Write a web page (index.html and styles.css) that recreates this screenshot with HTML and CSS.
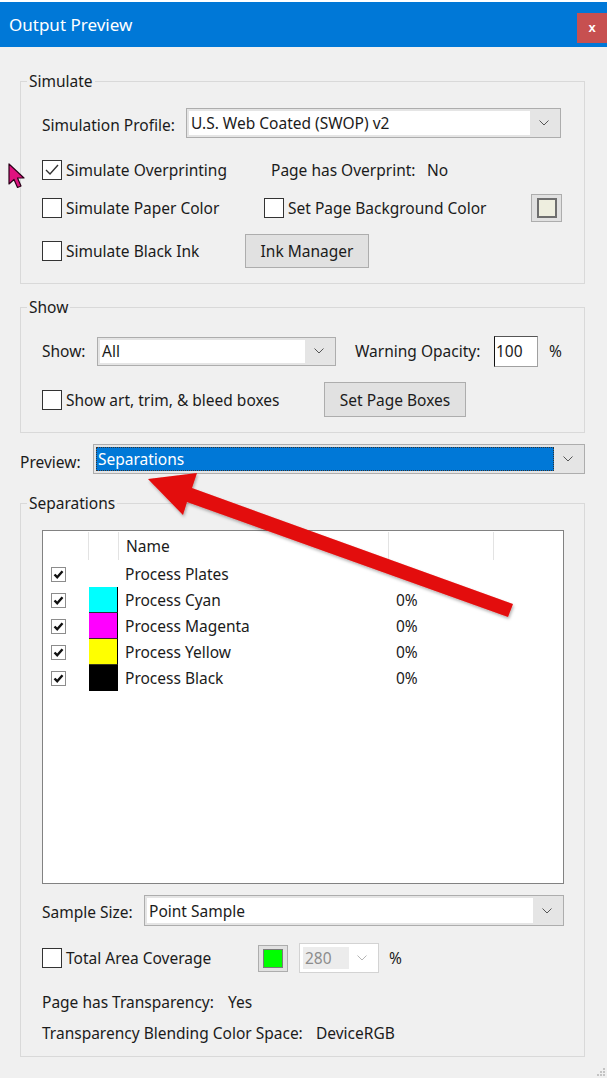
FILE: index.html
```html
<!DOCTYPE html>
<html lang="en">
<head>
    <meta charset="UTF-8">
    <meta name="viewport" content="width=device-width, initial-scale=1.0">
    <title>Output Preview</title>
    <link rel="stylesheet" href="styles.css">
</head>
<body>
<div class="window">
    <div class="topstrip"></div>
    <div class="titlebar">
        <span class="title">Output Preview</span>
        <button class="close">x</button>
    </div>

    <div class="content">
        <fieldset class="group simulate">
            <legend>Simulate</legend>
            <div class="row profile-row">
                <span class="profile-label">Simulation Profile:</span>
                <div class="combo profile-combo">
                    <span class="combo-text">U.S. Web Coated (SWOP) v2</span>
                    <span class="combo-arrow"><svg width="10" height="6" viewBox="0 0 10 6"><polyline points="0.5,0.5 5,5 9.5,0.5" fill="none" stroke="#555" stroke-width="1"/></svg></span>
                </div>
            </div>
            <div class="row overprint-row">
                <label class="check overprint-check">
                    <span class="box"><svg width="16" height="14" viewBox="0 0 16 14"><polyline points="2,7 6,11 14,2" fill="none" stroke="#333" stroke-width="1.4"/></svg></span>
                    Simulate Overprinting
                </label>
                <span class="info-label">Page has Overprint:</span>
                <span>No</span>
            </div>
            <div class="row paper-row">
                <label class="check paper-check"><span class="box"></span>Simulate Paper Color</label>
                <label class="check bg-check"><span class="box"></span>Set Page Background Color</label>
                <span class="swatch-btn"><span class="swatch paper-swatch"></span></span>
            </div>
            <div class="row ink-row">
                <label class="check ink-check"><span class="box"></span>Simulate Black Ink</label>
                <button class="btn ink-btn">Ink Manager</button>
            </div>
        </fieldset>

        <fieldset class="group show">
            <legend>Show</legend>
            <div class="row show-row">
                <span class="show-label">Show:</span>
                <div class="combo show-combo">
                    <span class="combo-text">All</span>
                    <span class="combo-arrow"><svg width="10" height="6" viewBox="0 0 10 6"><polyline points="0.5,0.5 5,5 9.5,0.5" fill="none" stroke="#555" stroke-width="1"/></svg></span>
                </div>
                <span class="opacity-label">Warning Opacity:</span>
                <span class="num-input">100</span>
                <span class="pct">%</span>
            </div>
            <div class="row boxes-row">
                <label class="check boxes-check"><span class="box"></span>Show art, trim, &amp; bleed boxes</label>
                <button class="btn boxes-btn">Set Page Boxes</button>
            </div>
        </fieldset>

        <div class="row preview-row">
            <span class="preview-label">Preview:</span>
            <div class="combo preview-combo">
                <span class="combo-text selected">Separations</span>
                <span class="combo-arrow"><svg width="10" height="6" viewBox="0 0 10 6"><polyline points="0.5,0.5 5,5 9.5,0.5" fill="none" stroke="#555" stroke-width="1"/></svg></span>
            </div>
        </div>

        <fieldset class="group separations">
            <legend>Separations</legend>
            <div class="list">
                <div class="list-head">
                    <span class="hcell"></span>
                    <span class="hcell"></span>
                    <span class="hcell name-cell">Name</span>
                    <span class="hcell"></span>
                    <span class="hcell"></span>
                </div>
                <div class="list-row">
                    <span class="check-cell"><span class="mini-box"><svg width="13" height="13" viewBox="0 0 13 13"><polyline points="2.5,6.5 5.2,9.2 10.5,3.2" fill="none" stroke="#111" stroke-width="2.4"/></svg></span></span>
                    <span class="ink-cell"></span>
                    <span class="name-cell">Process Plates</span>
                    <span class="pct-cell"></span>
                    <span></span>
                </div>
                <div class="list-row">
                    <span class="check-cell"><span class="mini-box"><svg width="13" height="13" viewBox="0 0 13 13"><polyline points="2.5,6.5 5.2,9.2 10.5,3.2" fill="none" stroke="#111" stroke-width="2.4"/></svg></span></span>
                    <span class="ink-cell"><span class="ink cyan"></span></span>
                    <span class="name-cell">Process Cyan</span>
                    <span class="pct-cell">0%</span>
                    <span></span>
                </div>
                <div class="list-row">
                    <span class="check-cell"><span class="mini-box"><svg width="13" height="13" viewBox="0 0 13 13"><polyline points="2.5,6.5 5.2,9.2 10.5,3.2" fill="none" stroke="#111" stroke-width="2.4"/></svg></span></span>
                    <span class="ink-cell"><span class="ink magenta"></span></span>
                    <span class="name-cell">Process Magenta</span>
                    <span class="pct-cell">0%</span>
                    <span></span>
                </div>
                <div class="list-row">
                    <span class="check-cell"><span class="mini-box"><svg width="13" height="13" viewBox="0 0 13 13"><polyline points="2.5,6.5 5.2,9.2 10.5,3.2" fill="none" stroke="#111" stroke-width="2.4"/></svg></span></span>
                    <span class="ink-cell"><span class="ink yellow"></span></span>
                    <span class="name-cell">Process Yellow</span>
                    <span class="pct-cell">0%</span>
                    <span></span>
                </div>
                <div class="list-row">
                    <span class="check-cell"><span class="mini-box"><svg width="13" height="13" viewBox="0 0 13 13"><polyline points="2.5,6.5 5.2,9.2 10.5,3.2" fill="none" stroke="#111" stroke-width="2.4"/></svg></span></span>
                    <span class="ink-cell"><span class="ink black"></span></span>
                    <span class="name-cell">Process Black</span>
                    <span class="pct-cell">0%</span>
                    <span></span>
                </div>
            </div>

            <div class="row sample-row">
                <span class="sample-label">Sample Size:</span>
                <div class="combo sample-combo">
                    <span class="combo-text">Point Sample</span>
                    <span class="combo-arrow"><svg width="10" height="6" viewBox="0 0 10 6"><polyline points="0.5,0.5 5,5 9.5,0.5" fill="none" stroke="#555" stroke-width="1"/></svg></span>
                </div>
            </div>
            <div class="row tac-row">
                <label class="check tac-check"><span class="box"></span>Total Area Coverage</label>
                <span class="swatch-btn green-btn"><span class="swatch green-swatch"></span></span>
                <div class="combo tac-combo">
                    <span class="combo-text">280</span>
                    <span class="combo-arrow"><svg width="10" height="6" viewBox="0 0 10 6"><polyline points="0.5,0.5 5,5 9.5,0.5" fill="none" stroke="#b5b5b5" stroke-width="1"/></svg></span>
                </div>
                <span class="pct">%</span>
            </div>
            <div class="row transp-row">
                <span class="transp-label">Page has Transparency:</span>
                <span>Yes</span>
            </div>
            <div class="row blend-row">
                <span class="blend-label">Transparency Blending Color Space:</span>
                <span>DeviceRGB</span>
            </div>
        </fieldset>
    </div>

    <!-- mouse pointer left in the capture -->
    <svg class="cursor" width="20" height="27" viewBox="0 0 20 27">
        <polygon points="1,1 1,21 6,16.5 9.5,24.5 13,23 9.5,15 16,15" fill="#e0127f" stroke="#2a0018" stroke-width="1.2" stroke-linejoin="round"/>
    </svg>

    <!-- red annotation arrow -->
    <svg class="annotation" width="607" height="1078" viewBox="0 0 607 1078">
        <defs>
            <filter id="shade" x="-10%" y="-10%" width="120%" height="130%">
                <feDropShadow dx="1" dy="2" stdDeviation="1.5" flood-color="#000" flood-opacity="0.3"/>
            </filter>
        </defs>
        <polygon points="148,479 197,473 192,488 513,604 508,617 187,502 183,515" fill="#e30a0a" filter="url(#shade)"/>
    </svg>

    <svg class="grip" width="9" height="9" viewBox="0 0 9 9">
        <rect x="6" y="0" width="2" height="2" fill="#c4c4c4"/>
        <rect x="3" y="3" width="2" height="2" fill="#c4c4c4"/>
        <rect x="6" y="3" width="2" height="2" fill="#c4c4c4"/>
        <rect x="0" y="6" width="2" height="2" fill="#c4c4c4"/>
        <rect x="3" y="6" width="2" height="2" fill="#c4c4c4"/>
        <rect x="6" y="6" width="2" height="2" fill="#c4c4c4"/>
    </svg>
</div>
</body>
</html>
```

FILE: styles.css
```css
* {
    box-sizing: border-box;
}

body {
    margin: 0;
    background: #f0f0f0;
    font-family: "Noto Sans", "Open Sans", sans-serif;
    font-size: 15.5px;
    color: #1b1b1b;
}

.window {
    position: relative;
    width: 607px;
    height: 1078px;
    overflow: hidden;
    background: #f0f0f0;
}

.topstrip {
    height: 2px;
    background: #fff;
}

.titlebar {
    height: 45px;
    background: #0078d7;
    display: flex;
    align-items: flex-start;
    justify-content: space-between;
    padding-left: 9px;
}

.title {
    color: #fff;
    font-size: 17px;
    line-height: 45px;
}

.close {
    width: 30px;
    height: 30px;
    margin-top: 11px;
    border: none;
    background: #c75050;
    color: #fff;
    font-family: "Liberation Sans", sans-serif;
    font-size: 13px;
    font-weight: bold;
    padding: 0 0 1px;
}

.content {
    padding: 24px 22px 0 20px;
}

.group {
    margin: 0;
    width: 565px;
    min-width: 0;
    padding: 0 21px 15px;
    border: 1px solid #d9d9d9;
}

.group legend {
    margin-left: -15px;
    padding: 0 2px;
    line-height: 20px;
}

.row {
    display: flex;
    align-items: center;
    white-space: nowrap;
}

/* checkboxes */
.check {
    display: flex;
    align-items: center;
}

.box {
    width: 20px;
    height: 20px;
    margin-right: 4px;
    border: 1px solid #333;
    background: #fff;
    display: flex;
    align-items: center;
    justify-content: center;
}

/* combo boxes */
.combo {
    display: flex;
    height: 30px;
    padding: 2px;
    border: 1px solid #adadad;
    background: #e5e5e5;
}

.combo-text {
    flex: 1;
    display: flex;
    align-items: center;
    padding-left: 2px;
    background: #fff;
}

.combo-text.selected {
    background: #0078d7;
    color: #fff;
    outline: 1px dotted #333;
    outline-offset: -1px;
}

.combo-arrow {
    width: 28px;
    display: flex;
    align-items: center;
    justify-content: center;
}

.btn {
    height: 100%;
    padding: 0;
    border: 1px solid #adadad;
    background: #e1e1e1;
    color: #1b1b1b;
    font: inherit;
}

.swatch-btn {
    display: flex;
    align-items: center;
    justify-content: center;
    width: 31px;
    height: 28px;
    border: 1px solid #adadad;
    background: #e1e1e1;
}

.swatch {
    width: 20px;
    height: 20px;
    border: 2px solid #6e6e6e;
}

.paper-swatch {
    background: #eeeedf;
}

.pct {
    margin-left: 11px;
}

/* Simulate */
.profile-row {
    margin-top: 17px;
    height: 30px;
}

.profile-label {
    width: 144px;
    padding-top: 3px;
}

.profile-combo {
    width: 375px;
}

.overprint-row {
    margin-top: 16px;
    height: 32px;
}

.overprint-check {
    width: 229px;
}

.info-label {
    width: 156px;
}

.paper-row {
    margin-top: 6px;
    height: 32px;
}

.paper-check {
    width: 222px;
}

.bg-check {
    width: 267px;
}

.ink-row {
    margin-top: 10px;
    height: 34px;
}

.ink-check {
    width: 203px;
}

.ink-btn {
    width: 124px;
}

/* Show */
.show {
    margin-top: 13px;
}

.show-row {
    margin-top: 18px;
    height: 32px;
}

.show-label {
    width: 55px;
}

.show-combo {
    width: 239px;
    height: 29px;
}

.opacity-label {
    width: 139px;
    margin-left: 19px;
}

.num-input {
    width: 44px;
    height: 31px;
    display: flex;
    align-items: center;
    padding-left: 1px;
    border: 1px solid #a0a0a0;
    border-left-color: #111;
    border-top-color: #555;
    background: #fff;
}

.boxes-row {
    margin-top: 15px;
    height: 35px;
}

.boxes-check {
    width: 282px;
}

.boxes-btn {
    width: 142px;
}

/* Preview */
.preview-row {
    margin-top: 11px;
    height: 30px;
}

.preview-label {
    width: 73px;
    padding-top: 6px;
}

.preview-combo {
    width: 492px;
}

/* Separations */
.separations {
    margin-top: 19px;
    padding: 0 20px 13px 21px;
}

.list {
    margin-top: 17px;
    height: 354px;
    border: 1px solid #828282;
    background: #fff;
}

.list-head,
.list-row {
    display: grid;
    grid-template-columns: 45px 30px 270px 105px 1fr;
}

.list-head {
    height: 30px;
}

.hcell {
    display: flex;
    align-items: center;
    margin: 1px 0;
}

.hcell + .hcell {
    border-left: 1px solid #e3e3e3;
}

.list-row {
    height: 26px;
    align-items: center;
}

.name-cell {
    padding-left: 7px;
}

.pct-cell {
    padding-left: 8px;
}

.check-cell {
    padding-left: 8px;
}

.mini-box {
    width: 15px;
    height: 15px;
    border: 1px solid #8c8c8c;
    background: #fff;
    display: flex;
    align-items: center;
    justify-content: center;
}

.ink-cell {
    height: 26px;
    padding-left: 1px;
}

.ink {
    display: block;
    height: 100%;
    border-right: 1px solid #000;
}

.cyan {
    background: #00ffff;
    border-bottom: 1px solid #1d3a3a;
}

.magenta {
    background: #ff00ff;
    border-bottom: 1px solid #3a1d3a;
}

.yellow {
    background: #ffff00;
    border-bottom: 1px solid #3a3a1d;
}

.black {
    background: #000;
}

.sample-row {
    margin-top: 11px;
    height: 31px;
}

.sample-label {
    width: 102px;
    padding-top: 3px;
}

.sample-combo {
    width: 420px;
    height: 31px;
}

.tac-row {
    margin-top: 16px;
    height: 32px;
}

.tac-check {
    width: 216px;
}

.green-btn {
    width: 30px;
    height: 27px;
}

.green-swatch {
    width: 20px;
    height: 19px;
    border: 1px solid #7a7a7a;
    background: #00ff00;
}

.tac-combo {
    width: 80px;
    margin-left: 11px;
    border-color: #d3d3d3;
    background: #fff;
    padding: 3px;
}

.tac-combo .combo-text {
    background: #ececec;
    color: #8d8d8d;
    flex: 0 0 46px;
}

.tac-combo .combo-arrow {
    flex: 1;
}

.tac-row .pct {
    margin-left: 10px;
}

.transp-row {
    margin-top: 18px;
    height: 20px;
}

.transp-label {
    width: 186px;
}

.blend-row {
    margin-top: 11px;
    height: 20px;
}

.blend-label {
    width: 274px;
}

/* overlays */
.cursor {
    position: absolute;
    left: 8px;
    top: 163px;
}

.annotation {
    position: absolute;
    left: 0;
    top: 0;
    pointer-events: none;
}

.grip {
    position: absolute;
    right: 1px;
    bottom: 1px;
}
```
